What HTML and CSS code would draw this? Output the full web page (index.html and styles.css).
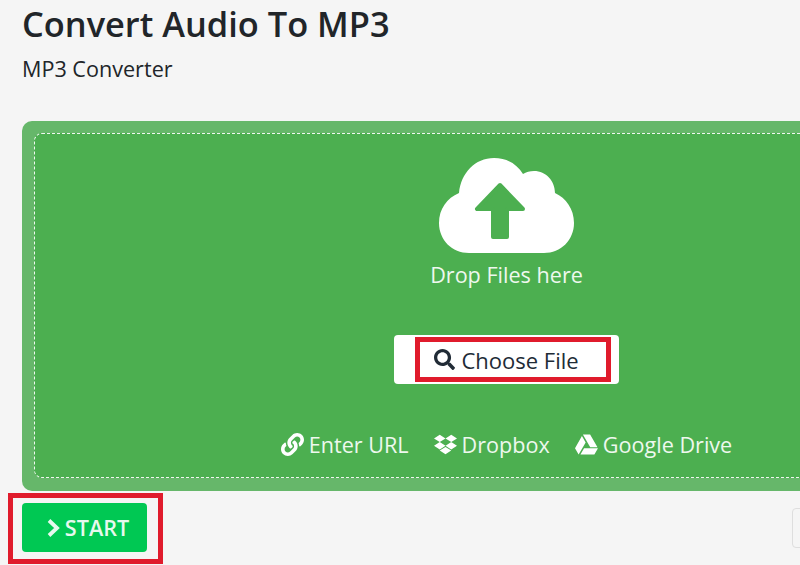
FILE: index.html
```html
<!DOCTYPE html>
<html lang="en">

<head>
    <meta charset="UTF-8">
    <meta name="viewport" content="width=device-width, initial-scale=1.0">
    <title>Convert Audio To MP3</title>
    <link rel="stylesheet" href="styles.css">
</head>

<body>
    <main class="page">
        <header class="page-head">
            <h1>Convert Audio To MP3</h1>
            <p>MP3 Converter</p>
        </header>

        <section class="upload">
            <div class="drop-zone">
                <svg class="cloud" viewBox="0 0 135 95" aria-hidden="true">
                    <path fill="#fff" d="M30 95C13 95 0 82 0 65C0 51 8 40 20 35C22 15 36 0 55 0C68 0 78 6 84 16C87 14 91 13 95 13C107 13 116 23 116 35C127 40 135 51 135 65C135 82 122 95 105 95Z" />
                    <path class="cloud-arrow" d="M61 27L38 51H54V79H68V51H84Z" />
                </svg>
                <p class="drop-text">Drop Files here</p>
                <button class="choose" type="button">
                    <svg class="icon" viewBox="0 0 512 512" aria-hidden="true">
                        <path d="M505 442.7L405.3 343c-4.5-4.5-10.6-7-17-7H372c27.6-35.3 44-79.7 44-128C416 93.1 322.9 0 208 0S0 93.1 0 208s93.1 208 208 208c48.3 0 92.7-16.4 128-44v16.3c0 6.4 2.5 12.5 7 17l99.7 99.7c9.4 9.4 24.6 9.4 33.9 0l28.3-28.3c9.4-9.4 9.4-24.6.1-34zM208 336c-70.7 0-128-57.2-128-128 0-70.7 57.2-128 128-128 70.7 0 128 57.2 128 128 0 70.7-57.2 128-128 128z" />
                    </svg>
                    Choose File
                </button>
                <nav class="sources">
                    <a href="#">
                        <svg class="icon" viewBox="0 0 512 512" aria-hidden="true">
                            <path d="M326.612 185.391c59.747 59.809 58.927 155.698.36 214.59-.11.12-.24.25-.36.37l-67.2 67.2c-59.27 59.27-155.699 59.262-214.96 0-59.27-59.26-59.27-155.7 0-214.96l37.106-37.106c9.84-9.84 26.786-3.3 27.294 10.606.648 17.722 3.826 35.527 9.69 52.721 1.986 5.822.567 12.262-3.783 16.612l-13.087 13.087c-28.026 28.026-28.905 73.66-1.155 101.96 28.024 28.579 74.086 28.749 102.325.51l67.2-67.19c28.191-28.191 28.073-73.757 0-101.83-3.701-3.694-7.429-6.564-10.341-8.569a16.037 16.037 0 0 1-6.947-12.606c-.396-10.567 3.348-21.456 11.698-29.806l21.054-21.055c5.521-5.521 14.182-6.199 20.584-1.731a152.482 152.482 0 0 1 20.522 17.197zM467.547 44.449c-59.261-59.262-155.69-59.27-214.96 0l-67.2 67.2c-.12.12-.25.25-.36.37-58.566 58.892-59.387 154.781.36 214.59a152.454 152.454 0 0 0 20.521 17.196c6.402 4.468 15.064 3.789 20.584-1.731l21.054-21.055c8.35-8.35 12.094-19.239 11.698-29.806a16.037 16.037 0 0 0-6.947-12.606c-2.912-2.005-6.64-4.875-10.341-8.569-28.073-28.073-28.191-73.639 0-101.83l67.2-67.19c28.239-28.239 74.3-28.069 102.325.51 27.75 28.3 26.872 73.934-1.155 101.96l-13.087 13.087c-4.35 4.35-5.769 10.79-3.783 16.612 5.864 17.194 9.042 34.999 9.69 52.721.509 13.906 17.454 20.446 27.294 10.606l37.106-37.106c59.271-59.259 59.271-155.699.001-214.959z" />
                        </svg>
                        Enter URL
                    </a>
                    <a href="#">
                        <svg class="icon" viewBox="0 0 528 512" aria-hidden="true">
                            <path d="M264.4 116.3l-132 84.3 132 84.3-132 84.3L0 284.1l132.3-84.3L0 116.3 132.3 32l132.1 84.3zM131.6 395.7l132-84.3 132 84.3-132 84.3-132-84.3zm132.8-111.6l132-84.3-132-83.6L395.7 32 528 116.3l-132.3 84.3L528 284.8l-132.3 84.3-131.3-85z" />
                        </svg>
                        Dropbox
                    </a>
                    <a href="#">
                        <svg class="icon" viewBox="0 0 512 512" aria-hidden="true">
                            <path d="M339 314.9L175.4 32h161.2l163.6 282.9H339zm-137.5 23.6L120.9 480h310.5L512 338.5H201.5zM154.1 67.4L0 338.5 80.6 480 237 208.8 154.1 67.4z" />
                        </svg>
                        Google Drive
                    </a>
                </nav>
            </div>
        </section>

        <div class="actions">
            <button class="start" type="button">
                <svg class="start-icon" viewBox="0 0 14 20" aria-hidden="true">
                    <path d="M3 2.5L11 10L3 17.5" />
                </svg>
                START
            </button>
            <div class="options"></div>
        </div>
    </main>

    <!-- red boxes drawn over the screenshot -->
    <div class="mark mark-choose"></div>
    <div class="mark mark-start"></div>
</body>

</html>
```

FILE: styles.css
```css
html {
    box-sizing: border-box;
    font-family: "Open Sans", sans-serif;
    font-size: 16px;
}

*,
*::before,
*::after {
    box-sizing: inherit;
}

body {
    margin: 0;
    width: 800px;
    height: 565px;
    overflow: hidden;
    position: relative;
    background-color: #f5f5f5;
    color: #212529;
}

.page {
    width: 970px;
    margin-left: 22px;
}

.page-head h1 {
    margin: 0;
    padding-top: 2px;
    font-size: 34.4px;
    line-height: 44px;
    font-weight: 600;
}

.page-head p {
    margin: 0;
    padding-top: 9px;
    font-size: 21.6px;
    line-height: 27px;
}

.upload {
    margin-top: 39px;
    padding: 12px 13px 13px 12px;
    height: 370px;
    background-color: #66b76a;
    border-radius: 10px;
}

.drop-zone {
    height: 345px;
    display: flex;
    flex-direction: column;
    align-items: center;
    padding-top: 24px;
    background-color: #4caf50;
    border: 1px dashed #f0f7f0;
    border-radius: 8px;
    color: #fff;
}

.cloud {
    width: 135px;
    height: 95px;
    margin-left: -1px;
}

.cloud-arrow {
    fill: #4caf50;
    stroke: #4caf50;
    stroke-width: 4;
    stroke-linejoin: round;
}

.drop-text {
    margin: 8px 0 0;
    font-size: 21.6px;
    line-height: 27px;
    color: #eef8ee;
}

.choose {
    display: flex;
    justify-content: center;
    align-items: center;
    gap: 6px;
    width: 225px;
    height: 49px;
    margin-top: 47px;
    padding: 0;
    border: 0;
    border-radius: 4px;
    background-color: #fff;
    color: #212b36;
    font-family: inherit;
    font-size: 22px;
}

.choose .icon {
    width: 21px;
    height: 21px;
    fill: #212b36;
}

.sources {
    display: flex;
    gap: 25px;
    margin-top: 47px;
}

.sources a {
    display: flex;
    align-items: center;
    gap: 5px;
    color: #eef8ee;
    font-size: 21.6px;
    line-height: 27px;
    text-decoration: none;
}

.sources .icon {
    width: 23px;
    height: 23px;
    fill: #fff;
}

.actions {
    display: flex;
    justify-content: space-between;
    align-items: flex-start;
    margin-top: 12px;
}

.start {
    display: flex;
    justify-content: center;
    align-items: center;
    gap: 5px;
    width: 125px;
    height: 49px;
    padding: 0 0 0 6px;
    border: 0;
    border-radius: 4px;
    background-color: #00c853;
    color: #e6f9ee;
    font-family: inherit;
    font-size: 21.6px;
    font-weight: 600;
}

.start-icon {
    width: 14px;
    height: 20px;
    fill: none;
    stroke: #e6f9ee;
    stroke-width: 3.8;
}

.options {
    width: 200px;
    height: 40px;
    margin-top: 5px;
    border: 1px solid #dedede;
    border-radius: 4px;
    background-color: #f5f5f5;
}

.mark {
    position: absolute;
    border: 5px solid #e01b2c;
}

.mark-choose {
    left: 415px;
    top: 337px;
    width: 196px;
    height: 45px;
}

.mark-start {
    left: 8px;
    top: 493px;
    width: 155px;
    height: 71px;
}
```
